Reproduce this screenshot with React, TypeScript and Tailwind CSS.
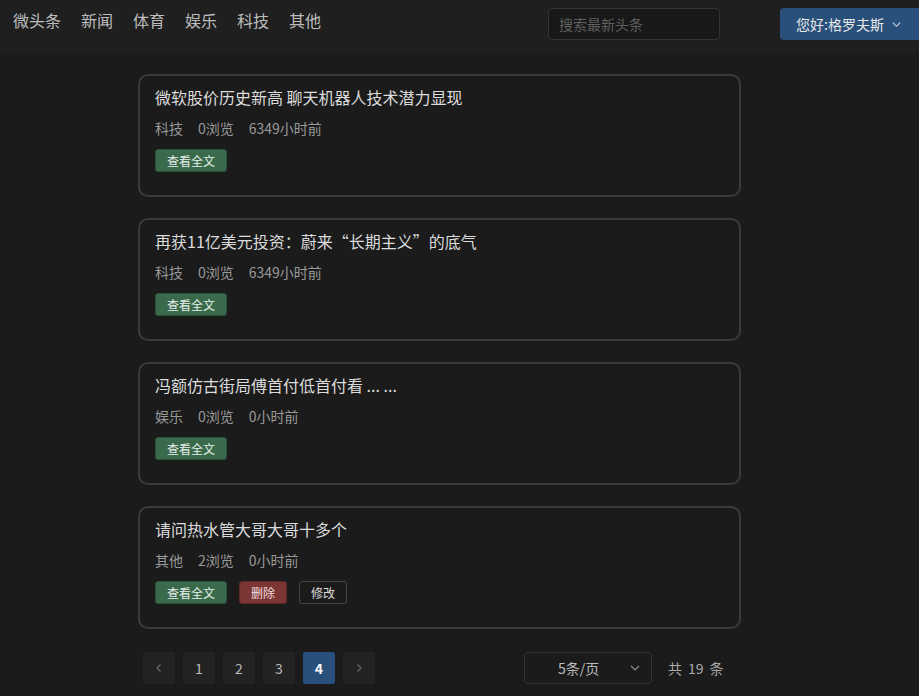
import React from "react";

const font = { fontFamily: '"Noto Sans CJK SC", "Noto Sans", sans-serif' };

type Item = { title: string; type: string; views: number; time: string; own?: boolean };

const items: Item[] = [
  { title: "微软股价历史新高 聊天机器人技术潜力显现", type: "科技", views: 0, time: "6349小时前" },
  { title: "再获11亿美元投资：蔚来“长期主义”的底气", type: "科技", views: 0, time: "6349小时前" },
  { title: "冯额仿古街局傅首付低首付看 ... ...", type: "娱乐", views: 0, time: "0小时前" },
  { title: "请问热水管大哥大哥十多个", type: "其他", views: 2, time: "0小时前", own: true },
];

export default function App() {
  return (
    <div className="min-h-[696px] w-full bg-[#1b1b1b] text-[#cfcfcf]" style={font}>
      <header className="flex h-[53px] items-start justify-between bg-[#1f1f1f]">
        <nav className="flex gap-[20px] pl-[13px] pt-[9px] text-[16px] leading-[22px] text-[#bdbdbd]">
          {["微头条", "新闻", "体育", "娱乐", "科技", "其他"].map((n) => (
            <span key={n}>{n}</span>
          ))}
        </nav>
        <div className="flex items-center pt-[8px]">
          <div className="flex h-[32px] w-[172px] items-center rounded-[4px] border border-[#333333] bg-[#181818] pl-[10px] text-[14px] text-[#5f5f5f]">
            搜索最新头条
          </div>
          <div className="ml-[60px] flex h-[32px] w-[139px] items-center rounded-l-[4px] bg-[#28507b] pl-[16px] text-[14px] text-[#e8e8e8]">
            您好:格罗夫斯
            <svg className="ml-[7px]" width="11" height="11" viewBox="0 0 12 12" fill="none" stroke="#c9d3de" strokeWidth="1.2">
              <path d="M2 4l4 4 4-4" />
            </svg>
          </div>
        </div>
      </header>

      <main className="flex flex-col pl-[138px] pt-[21px]">
        <div className="flex w-[603px] flex-col gap-[21px]">
          {items.map((it, i) => (
            <div key={i} className="h-[123px] rounded-[10px] border-2 border-[#3b3b3b] px-[15px] pt-[10px]">
              <div className="text-[16px] leading-[22px] text-[#dcdcdc]">{it.title}</div>
              <div className="mt-[10px] flex gap-[15px] text-[14px] leading-[20px] text-[#999999]">
                <span>{it.type}</span>
                <span>{it.views}浏览</span>
                <span>{it.time}</span>
              </div>
              <div className="mt-[11px] flex gap-[12px]">
                <button className="h-[23px] w-[72px] rounded-[3px] border border-[#2c4f39] bg-[#3a6a4c] text-[12px] leading-[21px] text-[#e6efe9]">
                  查看全文
                </button>
                {it.own && (
                  <>
                    <button className="h-[23px] w-[48px] rounded-[3px] border border-[#5c2828] bg-[#7b3535] text-[12px] leading-[21px] text-[#efdede]">
                      删除
                    </button>
                    <button className="h-[23px] w-[48px] rounded-[3px] border border-[#444444] bg-transparent text-[12px] leading-[21px] text-[#dddddd]">
                      修改
                    </button>
                  </>
                )}
              </div>
            </div>
          ))}
        </div>

        <div className="mt-[23px] flex items-center">
          <div className="ml-[5px] flex gap-[8px] text-[14px]">
            <div className="flex h-[32px] w-[32px] items-center justify-center rounded-[2px] bg-[#232323]">
              <svg width="10" height="10" viewBox="0 0 10 10" fill="none" stroke="#6a6a6a" strokeWidth="1.2">
                <path d="M6.5 1.5L3 5l3.5 3.5" />
              </svg>
            </div>
            {[1, 2, 3].map((n) => (
              <div key={n} className="flex h-[32px] w-[32px] items-center justify-center rounded-[2px] bg-[#232323] text-[#bbbbbb]">
                {n}
              </div>
            ))}
            <div className="flex h-[32px] w-[32px] items-center justify-center rounded-[2px] bg-[#28507b] font-bold text-white">
              4
            </div>
            <div className="flex h-[32px] w-[32px] items-center justify-center rounded-[2px] bg-[#232323]">
              <svg width="10" height="10" viewBox="0 0 10 10" fill="none" stroke="#6a6a6a" strokeWidth="1.2">
                <path d="M3.5 1.5L7 5 3.5 8.5" />
              </svg>
            </div>
          </div>
          <div className="ml-[149px] flex h-[32px] w-[128px] items-center rounded-[4px] border border-[#333333] pl-[33px] text-[14px] text-[#bbbbbb]">
            <span>5条/页</span>
            <svg className="ml-[30px]" width="12" height="12" viewBox="0 0 12 12" fill="none" stroke="#8a8a8a" strokeWidth="1.2">
              <path d="M2 4l4 4 4-4" />
            </svg>
          </div>
          <div className="ml-[16px] flex gap-[6px] text-[14px] text-[#aaaaaa]">
            <span>共</span>
            <span>19</span>
            <span>条</span>
          </div>
        </div>
      </main>
    </div>
  );
}
